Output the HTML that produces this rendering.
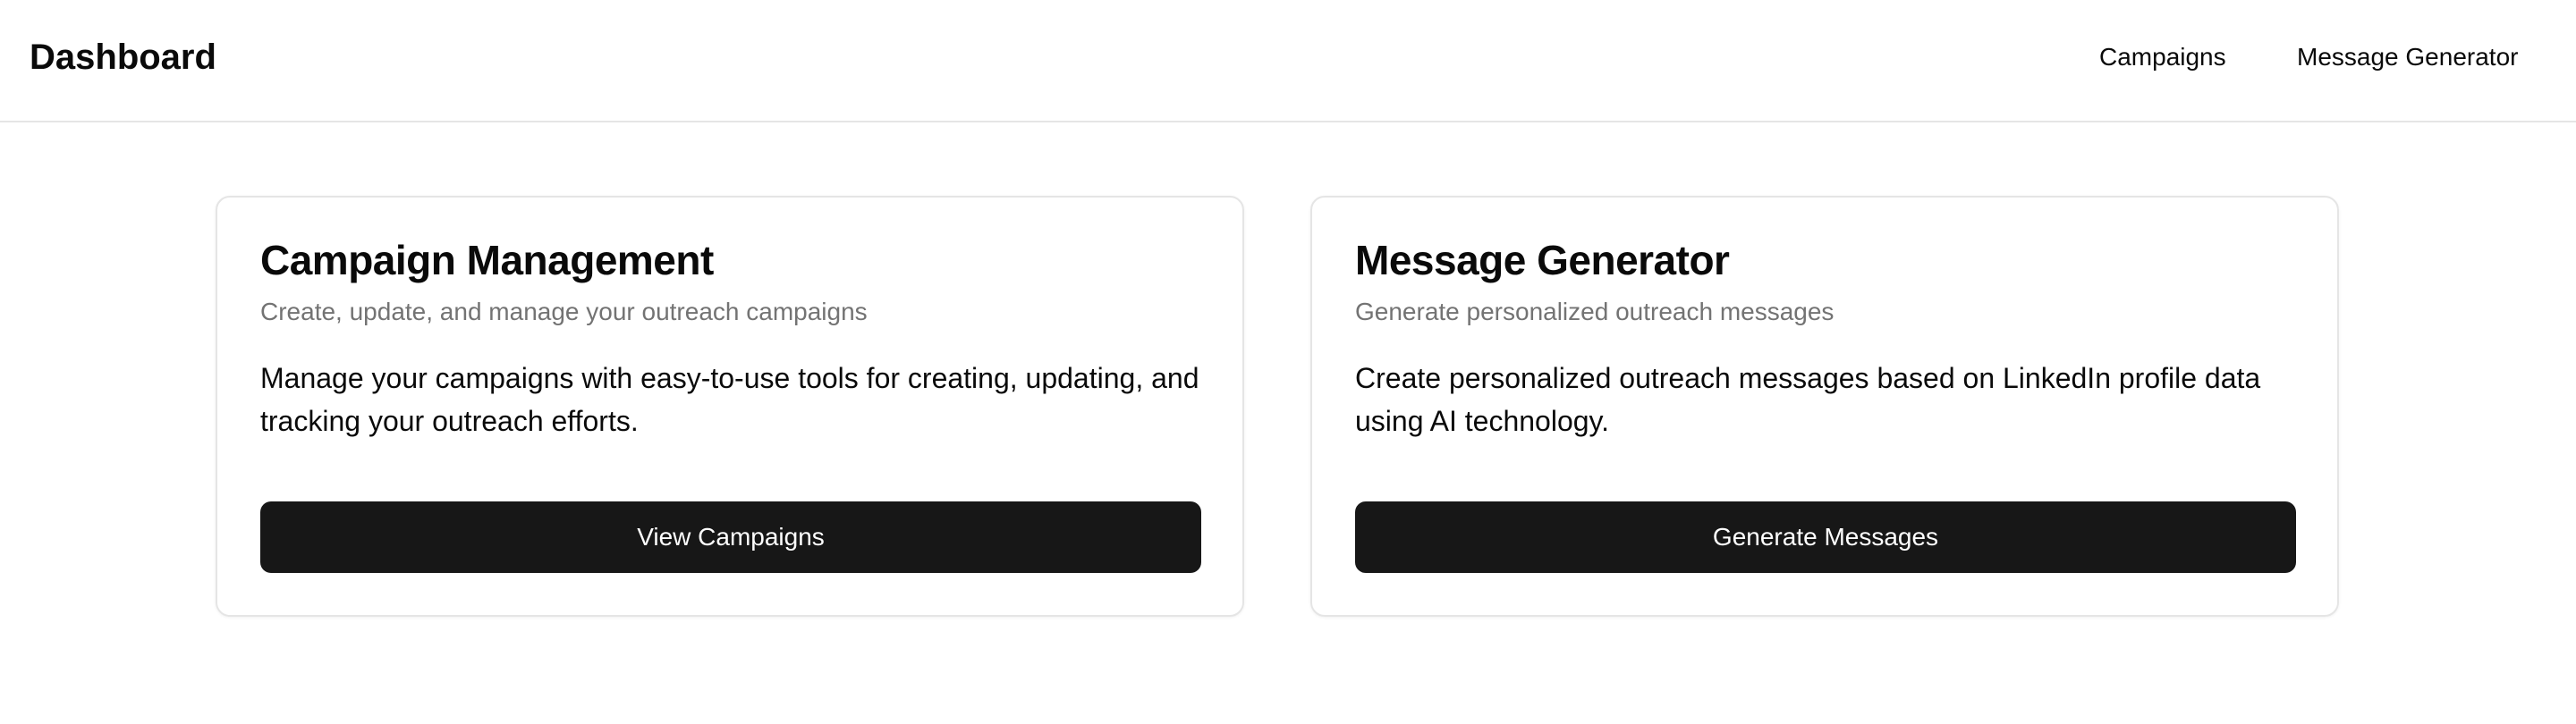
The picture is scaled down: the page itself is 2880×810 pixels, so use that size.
<!DOCTYPE html>
<html><head><style>
*{margin:0;padding:0;box-sizing:border-box}
body{width:2880px;height:810px;background:#fff;font-family:"Liberation Sans",Arial,sans-serif;color:#0a0a0a;position:relative;overflow:hidden}
.hdr{position:absolute;left:0;top:0;width:2880px;height:137px;border-bottom:2px solid #e5e5e5}
.logo{position:absolute;left:33px;top:40px;font-size:40px;font-weight:bold;line-height:48px}
.nav{position:absolute;top:46px;font-size:28px;line-height:36px}
.card{position:absolute;top:219px;width:1150px;height:471px;border:2px solid #e5e5e5;border-radius:16px;box-shadow:0 1px 3px rgba(0,0,0,0.06)}
.t{position:absolute;left:48px;top:40px;font-size:46px;font-weight:bold;line-height:60px;letter-spacing:-0.5px}
.s{position:absolute;left:48px;top:110px;font-size:28px;line-height:36px;color:#737373}
.b{position:absolute;left:48px;top:178px;width:1060px;font-size:32px;line-height:48px}
.btn{position:absolute;left:48px;top:340px;width:1052px;height:80px;background:#171717;border-radius:12px;color:#fff;font-size:28px;text-align:center;line-height:80px}
</style></head><body>
<div class="hdr">
<div class="logo">Dashboard</div>
<div class="nav" style="left:2347px">Campaigns</div>
<div class="nav" style="left:2568px">Message Generator</div>
</div>
<div class="card" style="left:241px">
<div class="t">Campaign Management</div>
<div class="s">Create, update, and manage your outreach campaigns</div>
<div class="b">Manage your campaigns with easy-to-use tools for creating, updating, and tracking your outreach efforts.</div>
<div class="btn">View Campaigns</div>
</div>
<div class="card" style="left:1465px">
<div class="t">Message Generator</div>
<div class="s">Generate personalized outreach messages</div>
<div class="b">Create personalized outreach messages based on LinkedIn profile data using AI technology.</div>
<div class="btn">Generate Messages</div>
</div>
</body></html>
